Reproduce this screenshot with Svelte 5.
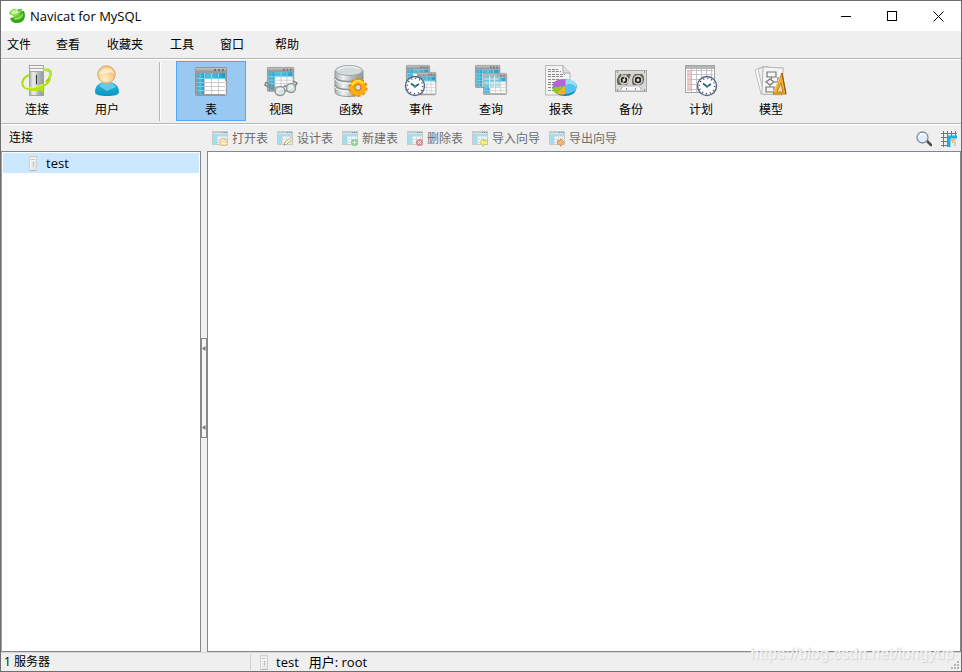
<script lang="ts">
  type Tool = { id: string; label: string };

  const menus = ['文件', '查看', '收藏夹', '工具', '窗口', '帮助'];

  const mainTools: Tool[] = [
    { id: 'connection', label: '连接' },
    { id: 'user', label: '用户' },
  ];

  const objectTools: Tool[] = [
    { id: 'table', label: '表' },
    { id: 'view', label: '视图' },
    { id: 'function', label: '函数' },
    { id: 'event', label: '事件' },
    { id: 'query', label: '查询' },
    { id: 'report', label: '报表' },
    { id: 'backup', label: '备份' },
    { id: 'schedule', label: '计划' },
    { id: 'model', label: '模型' },
  ];

  const actions: Tool[] = [
    { id: 'open', label: '打开表' },
    { id: 'design', label: '设计表' },
    { id: 'new', label: '新建表' },
    { id: 'delete', label: '删除表' },
    { id: 'import', label: '导入向导' },
    { id: 'export', label: '导出向导' },
  ];

  let active = $state('table');
</script>

<svelte:head><title>Navicat for MySQL</title></svelte:head>

<!-- a 32x29 table window, scaled down where an icon stacks several -->
{#snippet tableWindow()}
  <rect x="0.5" y="0.5" width="31" height="28" rx="1" fill="#9b9b9b" stroke="#969696" />
  <rect x="1" y="1" width="30" height="4" fill="url(#bar)" />
  <path d="M19 3h2M23 3h2M27 3h2" stroke="#707070" stroke-width="2" />
  <rect x="2" y="6" width="28" height="21" fill="#fff" />
  <rect x="2" y="6" width="28" height="5" fill="url(#blue)" />
  <rect x="2" y="6" width="7" height="21" fill="url(#blue)" />
  <path d="M9.5 11v16M16.5 11v16M23.5 11v16M9 15.5h21M9 19.5h21M9 23.5h21" stroke="#c8c8c8" fill="none" />
  <path d="M2 11.5h28M2 15.5h7M2 19.5h7M2 23.5h7M9.5 6v5M16.5 6v5M23.5 6v5" stroke="#7fd0ec" fill="none" />
  <path d="M30.5 14v14" stroke="#eee" />
{/snippet}

{#snippet clock()}
  <circle r="9.5" fill="#fff" stroke="#56648c" stroke-width="1.4" />
  <circle r="7.6" fill="none" stroke="#333" stroke-width="1.4" stroke-dasharray="1 2.98" />
  <path d="M-4-2.5L0 0.5L4-2" fill="none" stroke="#245c72" stroke-width="1.6" />
  <circle r="1.3" cy="0.4" fill="#2d91a5" />
{/snippet}

{#snippet server()}
  <svg class="server" viewBox="0 0 8 15" aria-hidden="true">
    <rect x="0.5" y="0.5" width="7" height="14" fill="#e8e8e8" stroke="#cfcfcf" />
    <path d="M1 2.5h6M1 4.5h6" stroke="#fafafa" />
    <path d="M2 3.5h4M4.5 6v5" stroke="#c2c2c2" />
    <path d="M1.5 5v9" stroke="#fafafa" />
    <path d="M1 14.5h6" stroke="#b5b5b5" />
  </svg>
{/snippet}

{#snippet toolIcon(id: string)}
  <svg class="tool-icon" viewBox="0 0 32 32" aria-hidden="true">
    {#if id === 'connection'}
      <path d="M9 9C29 0 35 8 25 17" fill="none" stroke="#9bd500" stroke-width="2" />
      <rect x="8.5" y="0.5" width="14" height="30" fill="url(#metal)" stroke="#a2a2a2" />
      <rect x="9" y="1" width="13" height="6" fill="#f5f5f5" />
      <path d="M9 3.5h13M9 6.5h13" stroke="#aaa" />
      <path d="M15.5 10v9" stroke="#333" />
      <path d="M13.5 8v19" stroke="#ddd" />
      <path d="M8 10C-1 14-1 24 9 24C18 24 27 20 29 14" fill="none" stroke="#addf08" stroke-width="2" />
      <path d="M4 23C11 25 17 21 22 19V28L19 25C13 27 8 26 4 23Z" fill="#b7e600" />
      <path d="M4 22C10 24 17 22 22 19" fill="none" stroke="#edff67" />
      <path d="M22 5C29 3 32 7 28 13" fill="none" stroke="#b8e331" stroke-width="2.5" />
    {:else if id === 'user'}
      <path d="M4 27C4 20 9 17 16 17S28 20 28 27C28 30 23 31 16 31S4 30 4 27Z" fill="url(#body)" />
      <path d="M8 21C12 16 21 16 25 22L16 26Z" fill="#83d6ed" opacity=".7" />
      <circle cx="15.5" cy="9.5" r="8.7" fill="url(#head)" stroke="#d9a65c" />
      <path d="M8 9C9 3 20 1 23 8C18 6 14 10 8 9Z" fill="#fff" opacity=".6" />
    {:else if id === 'table'}
      <g transform="translate(0 2)">{@render tableWindow()}</g>
    {:else if id === 'view'}
      <g transform="translate(2 2) scale(.85)">{@render tableWindow()}</g>
      <path d="M1 17L4 19L10 23M19 22C20 19 22 22 22 22M1 17L0 20L8 24M29 23L32 18L28 16" stroke="#858585" stroke-width="1.5" fill="none" />
      <ellipse cx="15" cy="26" rx="5" ry="4.5" fill="#dceae8" fill-opacity=".85" stroke="#909797" stroke-width="1.4" />
      <ellipse cx="26" cy="23" rx="4.5" ry="4.5" fill="#dceae8" fill-opacity=".85" stroke="#909797" stroke-width="1.4" />
      <path d="M12 27L17 23M24 25L28 20" stroke="#fff" />
    {:else if id === 'function'}
      <path d="M0 5V27C0 33 28 33 28 27V5" fill="url(#metal)" stroke="#919a9a" />
      <path d="M0 12C2 18 26 18 28 12M0 20C2 26 26 26 28 20" fill="none" stroke="#8c9696" stroke-width="1.5" />
      <path d="M0 14C2 20 26 20 28 14M0 22C2 28 26 28 28 22" fill="none" stroke="#f3f6f6" />
      <ellipse cx="14" cy="5.5" rx="13.5" ry="5" fill="#d3dada" stroke="#a0aaaa" />
      <path d="M3 5C7 1 20 1 24 4" stroke="#fff" fill="none" />
      <circle cx="23" cy="22.5" r="8" fill="none" stroke="#ee8500" stroke-width="3" stroke-dasharray="3 2.03" />
      <circle cx="23" cy="22.5" r="5.5" fill="none" stroke="#ffad0b" stroke-width="5" />
      <path d="M17 20C20 15 25 15 28 18" stroke="#ffde3b" stroke-width="2" fill="none" />
      <circle cx="23" cy="22.5" r="3" fill="#d9dede" stroke="#bd6a13" />
    {:else if id === 'event'}
      <g transform="translate(1 0) scale(.75)">{@render tableWindow()}</g>
      <g transform="translate(12 7) scale(.6 .8)">{@render tableWindow()}</g>
      <g transform="translate(10 21)">{@render clock()}</g>
    {:else if id === 'query'}
      <g transform="translate(0 0) scale(.79)">{@render tableWindow()}</g>
      <g transform="translate(8 8) scale(.75)" opacity=".92">{@render tableWindow()}</g>
      <path d="M8 10H25V22H8Z" fill="#8bcdda" opacity=".55" />
      <path d="M9 14h15M9 18h15M14.5 11v12M19.5 11v12" stroke="#dceef0" />
    {:else if id === 'report'}
      <path d="M.5.5H18L25 8V30H.5Z" fill="#f3f3f3" stroke="#b8b8b8" />
      <path d="M18 .5V8H25" fill="#ddd" stroke="#aaa" />
      <path d="M3 4.5h10M3 6.5h13M3 9.5h17M3 11.5h15M3 14.5h12M3 17.5h8M3 19.5h7M3 22.5h5M3 25.5h6" stroke="#8a8a8a" stroke-dasharray="3 1" />
      <ellipse cx="20" cy="24" rx="11" ry="7" fill="#1487b8" />
      <ellipse cx="20" cy="21.5" rx="12" ry="7.5" fill="#55c3ef" />
      <path d="M20 21L8 23C6 17 12 14 20 14Z" fill="#b564d4" />
      <path d="M18 21L7 23C8 27 10 28 13 29Z" fill="#8fc920" />
      <path d="M20 21L12 28C15 30 18 30 20 29Z" fill="#ffae24" />
      <path d="M21 15C28 14 32 18 31 22C27 18 24 18 21 20Z" fill="#a9e5fa" opacity=".8" />
    {:else if id === 'backup'}
      <rect x=".5" y="5.5" width="31" height="21" fill="#dadada" stroke="#a5a5a5" />
      <path d="M3 8H29V20L24 25H7L3 20Z" fill="#d2d2cf" />
      <path d="M5 9H16L12 20H3C1 16 2 12 5 9ZM20 9H27C31 13 29 19 25 20H18C16 16 17 12 20 9Z" fill="#69655f" />
      <circle cx="9" cy="15" r="4" fill="#27231e" stroke="#e0ded8" stroke-width="1.4" />
      <circle cx="23" cy="15" r="4" fill="#27231e" stroke="#e0ded8" stroke-width="1.4" />
      <circle cx="9" cy="15" r="1.5" fill="#ddd" />
      <circle cx="23" cy="15" r="1.5" fill="#ddd" />
      <path d="M6 10L12 7L7 20" fill="none" stroke="#d8d8d5" />
      <path d="M5 26L8 21H24L27 26Z" fill="#f7f7f7" stroke="#b5b5b5" />
      <path d="M2 7h1M29 7h1M2 25h1M29 25h1M11 24h1M20 24h1" stroke="#777" stroke-width="1.5" />
    {:else if id === 'schedule'}
      <rect x=".5" y=".5" width="29" height="27" fill="#fff" stroke="#a3a3a3" />
      <rect x="1" y="1" width="28" height="3" fill="#b5b5b5" />
      <rect x="2" y="5" width="4" height="21" fill="#f5c9c9" />
      <path d="M2 5.5h26M2 9.5h26M2 14.5h26M2 19.5h26M2 24.5h26M6.5 4v23M11.5 4v23M16.5 4v23M21.5 4v23M26.5 4v23" stroke="#c2c2c2" />
      <g transform="translate(22 21)">{@render clock()}</g>
    {:else}
      <path d="M0 5L9 1L14 27L6 29Z" fill="#f7f7f7" stroke="#c2c2c2" />
      <path d="M3 4L13 1L20 27L9 30Z" fill="#eee" stroke="#c2c2c2" />
      <rect x="7.5" y="2.5" width="20" height="27" fill="#f5f5f5" stroke="#b5b5b5" transform="rotate(3 17 15)" />
      <path d="M12 7h9v5h-9zM15 14l4 3-4 3-4-3zM11 22h8v5h-8zM16.5 12v2M15 20v2M19 17h4v-5" fill="none" stroke="#777" stroke-width="1.2" />
      <path d="M27 8L18 29H31Z" fill="#f2ac2b" stroke="#b87818" />
      <path d="M27 8L31 29" stroke="#8a5915" />
      <path d="M26 18L22 27H28Z" fill="#e8dfca" stroke="#c47d17" />
      <path d="M25 12L19 27" stroke="#ffd87b" />
    {/if}
  </svg>
{/snippet}

{#snippet actionIcon(id: string)}
  <svg class="action-icon" viewBox="0 0 16 16" aria-hidden="true">
    <rect x=".5" y=".5" width="15" height="13" fill="#f4f6f6" stroke="#c9cbcb" />
    <path d="M1 1.5h14" stroke="#c5c5c5" />
    <path d="M10 1.5h1M12 1.5h1M14 1.5h1" stroke="#888" />
    <path d="M1 4h14" stroke="#a4dded" stroke-width="3" />
    <path d="M3 3v10" stroke="#a4dded" stroke-width="4" />
    <path d="M5.5 6v7M9.5 6v7M13.5 6v7M5 8.5h10M5 11.5h10" stroke="#dadddd" />
    {#if id === 'open'}
      <path d="M7.5 9.5l2-2h3v1h3l-1 6h-6z" fill="#f5dfb5" stroke="#e1bf84" />
      <path d="M9 12.5h6" stroke="#fff4d9" />
    {:else if id === 'design'}
      <path d="M7 14l1-3 6-5 2 2-6 5z" fill="#f3efb5" stroke="#b8b7a0" />
      <path d="M13 6l2-1 1 2-1 1z" fill="#eab8bb" />
      <path d="M7 14l1-1" stroke="#777" />
    {:else if id === 'new'}
      <circle cx="12.5" cy="11.5" r="3.5" fill="#84cf8e" />
      <path d="M12.5 9.5v4M10.5 11.5h4" stroke="#fff" />
    {:else if id === 'delete'}
      <circle cx="12.5" cy="11.5" r="3.5" fill="#dc8b91" />
      <path d="M11 10l3 3M14 10l-3 3" stroke="#fff" />
    {:else if id === 'import'}
      <path d="M7.5 11.5l4-4v2h4v4h-4v2z" fill="#f2ee83" stroke="#cfc95f" />
    {:else}
      <path d="M15.5 11.5l-4-4v2h-3v4h3v2z" fill="#f5b46f" stroke="#d99c62" />
    {/if}
  </svg>
{/snippet}

<div class="window">
  <svg class="defs" aria-hidden="true">
    <defs>
      <linearGradient id="blue"><stop stop-color="#35aed3" /><stop offset=".5" stop-color="#55bddb" /><stop offset="1" stop-color="#199dce" /></linearGradient>
      <linearGradient id="bar" x2="0" y2="1"><stop stop-color="#c5c5c5" /><stop offset="1" stop-color="#929292" /></linearGradient>
      <linearGradient id="metal"><stop stop-color="#a9b0b0" /><stop offset=".3" stop-color="#f1f3f3" /><stop offset=".6" stop-color="#b2b9b9" /><stop offset="1" stop-color="#929999" /></linearGradient>
      <linearGradient id="body" x2="0" y2="1"><stop stop-color="#35b4d9" /><stop offset="1" stop-color="#0297c3" /></linearGradient>
      <radialGradient id="head" cx=".4" cy=".75"><stop stop-color="#fff0cc" /><stop offset="1" stop-color="#f7ca85" /></radialGradient>
      <radialGradient id="logo" cx=".35" cy=".25"><stop stop-color="#c6f784" /><stop offset=".6" stop-color="#6fd63a" /><stop offset="1" stop-color="#38a31d" /></radialGradient>
    </defs>
  </svg>

  <header class="titlebar">
    <svg class="logo" viewBox="0 0 16 16" aria-hidden="true">
      <path d="M0 6C1 2 4 0 7 1L8 2L7 4L5 6L8 5L12 3L15 3L16 7C16 12 13 15 8 15C4 15 2 13 1 10L5 9L3 7Z" fill="url(#logo)" />
      <path d="M9 1L14 1L12 3L8 4Z" fill="#58c932" />
      <path d="M2 5C3 3 5 2 7 2L4 6Z" fill="#dcf9b4" />
      <path d="M5 10C9 10 12 8 14 5C15 9 11 12 6 12Z" fill="#a5ec6a" opacity=".8" />
    </svg>
    <h1>Navicat for MySQL</h1>
    <div class="window-buttons">
      <button aria-label="最小化"><svg viewBox="0 0 11 11"><path d="M0 5.5h10" /></svg></button>
      <button aria-label="最大化"><svg viewBox="0 0 11 11"><rect x=".5" y=".5" width="9" height="9" /></svg></button>
      <button aria-label="关闭"><svg viewBox="0 0 11 11"><path d="M.5.5l10 10M10.5.5l-10 10" /></svg></button>
    </div>
  </header>

  <nav class="menubar">
    {#each menus as menu}
      <button>{menu}</button>
    {/each}
  </nav>

  <div class="toolbar">
    {#each mainTools as tool}
      <button class="tool">{@render toolIcon(tool.id)}<span>{tool.label}</span></button>
    {/each}
    <div class="divider"></div>
    {#each objectTools as tool}
      <button class="tool" class:active={active === tool.id} onclick={() => (active = tool.id)}>
        {@render toolIcon(tool.id)}<span>{tool.label}</span>
      </button>
    {/each}
  </div>

  <main class="workspace">
    <section class="sidebar">
      <h2>连接</h2>
      <div class="pane">
        <button class="tree-item">{@render server()}<span>test</span></button>
      </div>
    </section>

    <div class="splitter">
      <button class="handle" aria-label="折叠侧栏">
        <svg viewBox="0 0 4 5"><path d="M3.5 0v5L0 2.5z" /></svg>
        <svg viewBox="0 0 4 5"><path d="M3.5 0v5L0 2.5z" /></svg>
      </button>
    </div>

    <section class="content">
      <div class="actions">
        {#each actions as action}
          <button class="action" disabled>{@render actionIcon(action.id)}<span>{action.label}</span></button>
        {/each}
        <div class="right-actions">
          <button aria-label="搜索">
            <svg viewBox="0 0 16 16">
              <path d="M11 10l4 4" stroke="#4d4d4d" stroke-width="2.5" stroke-linecap="round" />
              <circle cx="6.5" cy="6.5" r="5.5" fill="#deedfb" stroke="#7e8b9c" stroke-width="1.3" />
              <path d="M3 6c0-4 6-4 7-1" fill="none" stroke="#fff" stroke-width="1.5" />
            </svg>
          </button>
          <button aria-label="对象信息">
            <svg viewBox="0 0 16 16">
              <path d="M0 2.5h16M0 6.5h8M0 10.5h8M0 14.5h8M2.5 0v16M6.5 0v16M10.5 0v5M14.5 0v5" stroke="#777" />
              <rect x="7" y="5" width="9" height="11" fill="#eee" />
              <path d="M7 6h9M8 5v11" stroke="#20addf" stroke-width="3" />
              <path d="M10 9h2v2h-1" fill="none" stroke="#eebc29" stroke-width="1.4" />
              <path d="M13 9h2M13 12h2M13 14h2" stroke="#aaa" />
            </svg>
          </button>
        </div>
      </div>
      <div class="pane"></div>
    </section>
  </main>

  <footer class="statusbar">
    <span class="count">1 服务器</span>
    {@render server()}
    <span>test</span>
    <span class="account">用户: root</span>
    <svg class="grip" viewBox="0 0 9 9" aria-hidden="true">
      <path d="M6 1h2M3 4h2M6 4h2M0 7h2M3 7h2M6 7h2" />
    </svg>
  </footer>

  <span class="watermark">https://blog.csdn.net/longyup</span>
</div>

<style>
  :global(body) {
    margin: 0;
  }
  .window {
    position: relative;
    box-sizing: border-box;
    display: flex;
    flex-direction: column;
    min-height: 100vh;
    border: 1px solid #6e6e6e;
    background: #efefef;
    color: #000;
    font: 12px/16px 'Open Sans', 'Noto Sans CJK SC', sans-serif;
  }
  .defs {
    position: absolute;
    width: 0;
    height: 0;
  }
  button {
    padding: 0;
    border: 0;
    background: none;
    color: inherit;
    font: inherit;
    white-space: nowrap;
  }
  svg {
    display: block;
    flex-shrink: 0;
  }
  h1,
  h2 {
    margin: 0;
    font: inherit;
  }
  .titlebar {
    display: flex;
    align-items: center;
    height: 30px;
    padding-left: 8px;
    background: #fff;
  }
  .titlebar h1 {
    font-size: 13px;
  }
  .logo {
    width: 16px;
    height: 16px;
    margin-right: 5px;
  }
  .window-buttons {
    display: flex;
    margin-left: auto;
  }
  .window-buttons button {
    display: grid;
    place-items: center;
    width: 46px;
    height: 30px;
  }
  .window-buttons svg {
    width: 11px;
    height: 11px;
    fill: none;
    stroke: #000;
  }
  .window-buttons button:hover {
    background: #e5e5e5;
  }
  .menubar {
    display: grid;
    grid-template-columns: 49px 51px 63px 50px 55px auto;
    height: 27px;
    padding-left: 6px;
  }
  .menubar button {
    text-align: left;
  }
  .toolbar {
    display: flex;
    align-items: center;
    height: 64px;
    padding-left: 1px;
    border-top: 1px solid #b5b7b5;
    border-bottom: 1px solid #b5b7b5;
    box-shadow: inset 0 1px #fff, 0 1px #fff;
  }
  .tool {
    box-sizing: border-box;
    display: flex;
    flex-direction: column;
    align-items: center;
    gap: 5px;
    width: 70px;
    height: 60px;
    padding-top: 3px;
    border: 1px solid transparent;
  }
  .tool:hover {
    border-color: #99d1ff;
  }
  .tool.active {
    border-color: #4fa9f8;
    background: #99c9f3;
  }
  .tool-icon {
    width: 32px;
    height: 32px;
    overflow: visible;
  }
  .divider {
    width: 1px;
    height: 59px;
    margin: 0 15px 0 17px;
    border-right: 1px solid #fff;
    background: #b5b7b5;
  }
  .workspace {
    display: flex;
    flex: 1;
  }
  .sidebar,
  .content {
    display: flex;
    flex-direction: column;
  }
  .sidebar {
    width: 200px;
  }
  .sidebar h2 {
    height: 21px;
    padding: 6px 0 0 8px;
  }
  .content {
    flex: 1;
    min-width: 0;
  }
  .pane {
    flex: 1;
    padding: 1px;
    border: 1px solid #828790;
    background: #fff;
  }
  .sidebar .pane {
    border-left-color: #a0a0a0;
  }
  .tree-item {
    display: flex;
    align-items: center;
    gap: 9px;
    width: 100%;
    height: 20px;
    padding-left: 26px;
    background: #cce8ff;
    font-size: 13px;
  }
  .server {
    width: 8px;
    height: 15px;
  }
  .splitter {
    display: flex;
    flex-direction: column;
    width: 6px;
    padding-top: 27px;
  }
  .splitter::before {
    flex: 7;
    content: '';
  }
  .splitter::after {
    flex: 8;
    content: '';
  }
  .handle {
    box-sizing: border-box;
    display: flex;
    flex-direction: column;
    align-items: center;
    justify-content: space-between;
    height: 100px;
    padding: 7px 0;
    border: 1px solid #888;
    background: #f6f6f6;
  }
  .handle svg {
    width: 4px;
    height: 5px;
    fill: #777;
  }
  .actions {
    display: flex;
    align-items: center;
    gap: 9px;
    box-sizing: border-box;
    height: 27px;
    padding: 2px 4px 0 5px;
    color: #6d6d6d;
  }
  .action {
    display: flex;
    align-items: center;
    gap: 4px;
  }
  .action-icon {
    width: 16px;
    height: 16px;
  }
  .right-actions {
    display: flex;
    gap: 9px;
    margin-left: auto;
  }
  .right-actions svg {
    width: 16px;
    height: 16px;
  }
  .statusbar {
    display: flex;
    align-items: center;
    height: 18px;
    padding-left: 3px;
    border-top: 1px solid #d7d7d7;
    font-size: 13px;
  }
  .count {
    width: 246px;
    margin-right: 9px;
    border-right: 1px solid #d0d0d0;
    font-size: 12px;
  }
  .statusbar .server {
    margin-right: 8px;
  }
  .account {
    margin-left: 10px;
  }
  .grip {
    align-self: flex-end;
    width: 9px;
    height: 9px;
    margin: 0 1px 1px auto;
    stroke: #b5b5b5;
    stroke-width: 2;
  }
  .watermark {
    position: absolute;
    right: 7px;
    bottom: 8px;
    color: #f4f4f4;
    font: 16px/18px 'Liberation Sans', sans-serif;
    text-shadow: 1px 1px 1px #d2d2d2;
    pointer-events: none;
  }
</style>
